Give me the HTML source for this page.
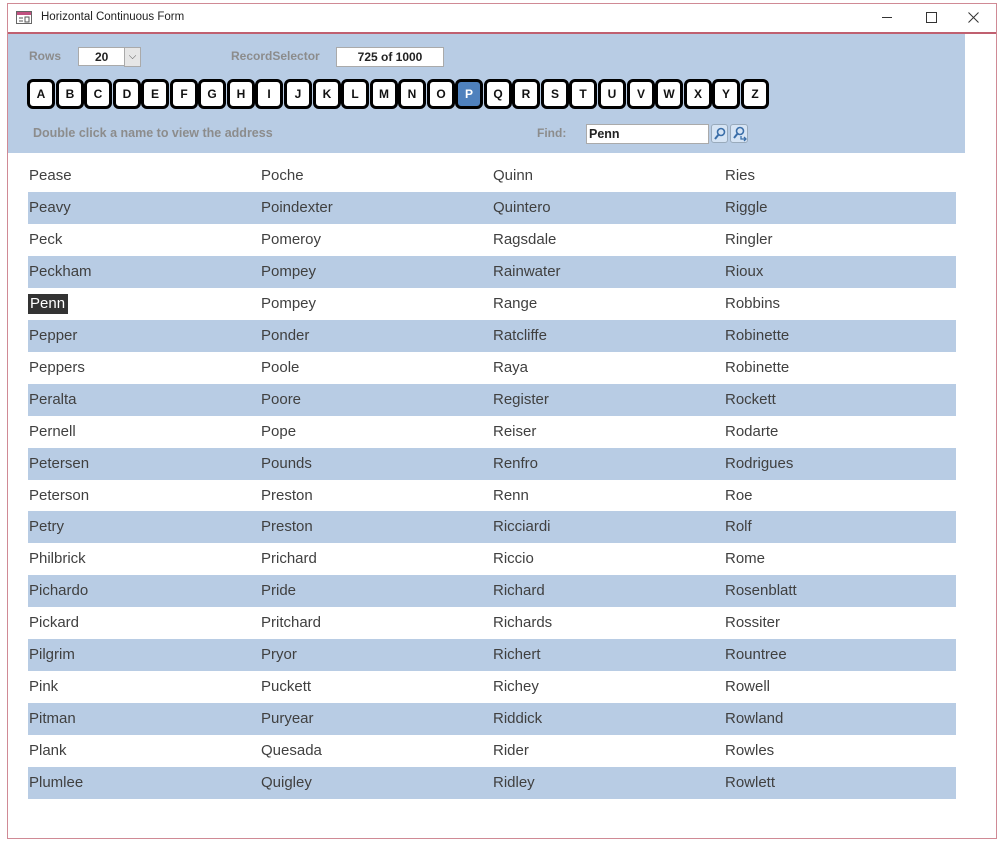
<!DOCTYPE html>
<html><head><style>
body{margin:0;width:1003px;height:844px;background:#fff;font-family:"Liberation Sans",sans-serif;position:relative;overflow:hidden}
.a{position:absolute}
.frame{left:7px;top:3px;width:990px;height:836px;border:1px solid #d08a95;box-sizing:border-box}
.hdr{left:8px;top:34px;width:957px;height:119px;background:#b8cce4}
.lbl{color:#8c8c8c;font-weight:bold;font-size:12px}
.btn{top:79px;width:22px;height:24px;border:3px solid #000;border-radius:6px;background:#fff;font-weight:bold;font-size:12px;text-align:center;line-height:24px;color:#111}
.row{left:28px;width:928px;height:32px}
.c{position:absolute;font-size:15px;color:#404040;top:7px}
</style></head><body>
<div class="a frame"></div>
<div class="a" style="left:8px;top:32px;width:988px;height:2px;background:#c06070"></div>
<svg class="a" style="left:16px;top:11px" width="16" height="13"><rect x="0.5" y="0.5" width="15" height="12" fill="#fff" stroke="#666"/><rect x="1" y="1" width="14" height="3" fill="#c05080"/><line x1="3" y1="7" x2="7" y2="7" stroke="#555"/><line x1="3" y1="10" x2="7" y2="10" stroke="#555"/><rect x="9" y="6" width="4" height="5" fill="none" stroke="#555"/></svg>
<div class="a" style="left:41px;top:11px;font-size:11.5px;color:#222">Horizontal Continuous Form</div>
<div class="a" style="left:882px;top:17px;width:10px;height:1px;background:#333"></div>
<div class="a" style="left:926px;top:12px;width:9px;height:9px;border:1px solid #333"></div>
<svg class="a" style="left:968px;top:12px" width="11" height="11"><path d="M0.5 0.5L10.5 10.5M10.5 0.5L0.5 10.5" stroke="#333" stroke-width="1"/></svg>
<div class="a hdr"></div>
<div class="a lbl" style="left:29px;top:49px">Rows</div>
<div class="a" style="left:78px;top:47px;width:62px;height:19px;background:#fff;border:1px solid #aaa;box-sizing:border-box"></div>
<div class="a" style="left:95px;top:50px;font-size:12px;font-weight:bold;color:#222">20</div>
<div class="a" style="left:124px;top:47px;width:17px;height:20px;background:#e6e6e6;border:1px solid #aaa;box-sizing:border-box;font-size:10px;color:#555;text-align:center;line-height:17px">⌵</div>
<div class="a lbl" style="left:231px;top:49px">RecordSelector</div>
<div class="a" style="left:336px;top:47px;width:108px;height:20px;background:#fff;border:1px solid #aaa;box-sizing:border-box;font-size:12px;font-weight:bold;text-align:center;line-height:18px;color:#222">725 of 1000</div>
<div id="btns"></div>
<div class="a lbl" style="left:33px;top:126px;font-size:12.5px">Double click a name to view the address</div>
<div class="a lbl" style="left:537px;top:126px">Find:</div>
<div class="a" style="left:586px;top:124px;width:123px;height:20px;background:#fff;border:1px solid #aaa;box-sizing:border-box;font-size:12.5px;font-weight:bold;padding:2px 0 0 2px;color:#222">Penn</div>
<div class="a" style="left:711px;top:124px;width:17px;height:19px;background:#d6e4f4;border:1px solid #9ab;border-radius:3px;box-sizing:border-box"></div>
<div class="a" style="left:730px;top:124px;width:18px;height:19px;background:#d6e4f4;border:1px solid #9ab;border-radius:3px;box-sizing:border-box"></div>
<svg class="a" style="left:711px;top:124px" width="38" height="19"><circle cx="10" cy="8" r="3.5" fill="none" stroke="#3a6ea8" stroke-width="1.6"/><line x1="8" y1="10" x2="4" y2="15" stroke="#3a6ea8" stroke-width="2"/><circle cx="29" cy="7" r="3.5" fill="none" stroke="#3a6ea8" stroke-width="1.6"/><line x1="27" y1="9" x2="23" y2="14" stroke="#3a6ea8" stroke-width="2"/><path d="M30 12v3h5M33 13l2 2-2 2" fill="none" stroke="#3a6ea8" stroke-width="1.3"/></svg>
<div id="rows"></div>
<script>
var L="ABCDEFGHIJKLMNOPQRSTUVWXYZ",h="";
for(var i=0;i<26;i++){var x=Math.round(27+i*28.55);h+='<div class="a btn" style="left:'+x+'px;'+(L[i]=="P"?'background:#4f81bd;color:#fff':'')+'">'+L[i]+'</div>';}
document.getElementById("btns").innerHTML=h;
var c=[["Pease","Poche","Quinn","Ries"],["Peavy","Poindexter","Quintero","Riggle"],["Peck","Pomeroy","Ragsdale","Ringler"],["Peckham","Pompey","Rainwater","Rioux"],["Penn","Pompey","Range","Robbins"],["Pepper","Ponder","Ratcliffe","Robinette"],["Peppers","Poole","Raya","Robinette"],["Peralta","Poore","Register","Rockett"],["Pernell","Pope","Reiser","Rodarte"],["Petersen","Pounds","Renfro","Rodrigues"],["Peterson","Preston","Renn","Roe"],["Petry","Preston","Ricciardi","Rolf"],["Philbrick","Prichard","Riccio","Rome"],["Pichardo","Pride","Richard","Rosenblatt"],["Pickard","Pritchard","Richards","Rossiter"],["Pilgrim","Pryor","Richert","Rountree"],["Pink","Puckett","Richey","Rowell"],["Pitman","Puryear","Riddick","Rowland"],["Plank","Quesada","Rider","Rowles"],["Plumlee","Quigley","Ridley","Rowlett"]];
var X=[1,233,465,697];h="";
for(var r=0;r<20;r++){h+='<div class="a row" style="top:'+(160+r*31.95)+'px;background:'+(r%2?'#b8cce4':'#fff')+'">';
for(var k=0;k<4;k++){var s=(r==4&&k==0)?'background:#333;color:#fff;padding:1px 3px 2px 2px;top:6px;left:0px':'left:'+X[k]+'px';h+='<span class="c" style="'+s+'">'+c[r][k]+'</span>';}
h+='</div>';}
document.getElementById("rows").innerHTML=h;
</script>
</body></html>
